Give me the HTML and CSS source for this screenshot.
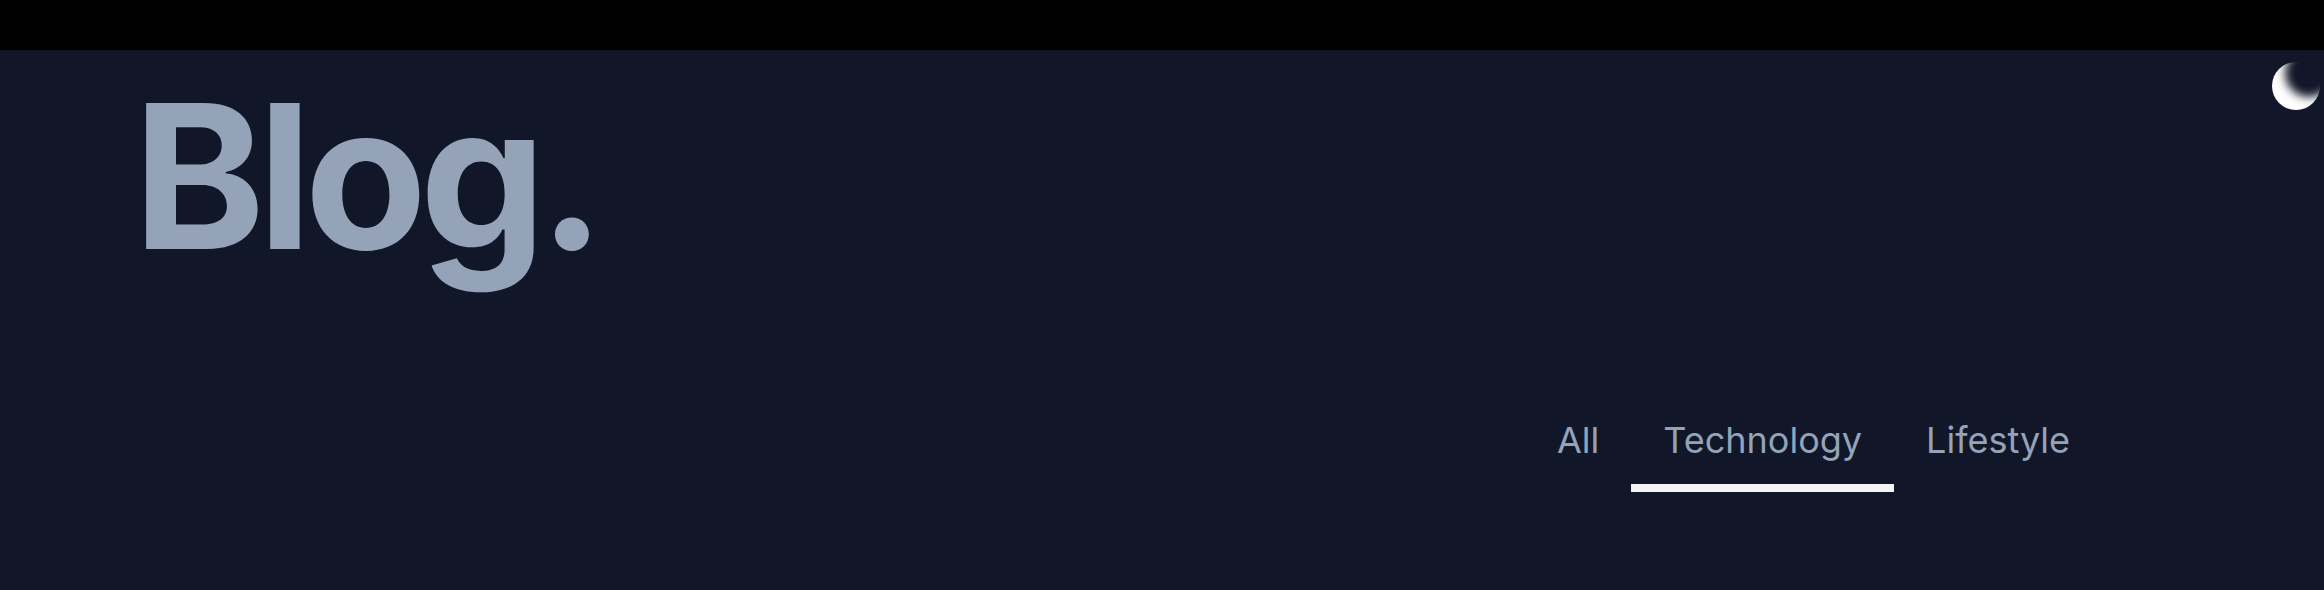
FILE: index.html
```html
<!DOCTYPE html>
<html lang="en">
<head>
    <meta charset="UTF-8">
    <meta name="viewport" content="width=device-width, initial-scale=1.0">
    <title>Blog</title>
    <link rel="stylesheet" href="styles.css">
</head>
<body>
    <div class="top-bar"></div>
    <main class="page">
        <header class="page-head">
            <h1 class="blog-title">Blog.</h1>
            <button class="theme-toggle" aria-label="Toggle theme"></button>
        </header>
        <nav class="tabs">
            <a class="tab" href="#">All</a>
            <a class="tab active" href="#">Technology</a>
            <a class="tab" href="#">Lifestyle</a>
        </nav>
    </main>
</body>
</html>
```

FILE: styles.css
```css
body {
    font-family: Inter, "Liberation Sans", sans-serif;
    background-color: #111729;
    margin: 0;
    height: 590px;
    overflow: hidden;
}
.top-bar {
    height: 50px;
    background-color: #000;
}
.page-head {
    display: flex;
    justify-content: space-between;
    align-items: flex-start;
    padding: 12px 4px 0 133px;
}
.blog-title {
    margin: 14px 0 0;
    font-size: 200px;
    line-height: 200px;
    font-weight: 700;
    letter-spacing: -7.5px;
    color: #94a3b8;
}
.theme-toggle {
    width: 48px;
    height: 48px;
    padding: 0;
    border: none;
    border-radius: 50%;
    background: transparent;
    box-shadow: inset 13px -13px 10px #fff;
    cursor: pointer;
}
.tabs {
    display: flex;
    justify-content: flex-end;
    margin-top: 136px;
    padding-right: 222px;
}
.tab {
    padding: 8px 32px 24px;
    font-size: 36px;
    line-height: 40px;
    color: #94a3b8;
    text-decoration: none;
    border-bottom: 8px solid transparent;
}
.tab.active {
    border-bottom-color: #f3f4f6;
}
```
